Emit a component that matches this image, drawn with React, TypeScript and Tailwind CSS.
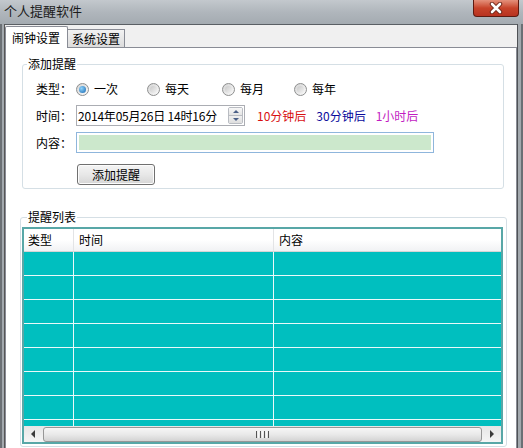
import React from "react";

const font = "font-['Noto_Sans_CJK_SC','Liberation_Sans',sans-serif]";

function Radio({ checked }: { checked?: boolean }) {
  return (
    <span className="w-[13px] h-[13px] rounded-full border border-[#8e8f8f] bg-linear-to-br from-[#d4d4d4] to-[#fbfbfb] flex items-center justify-center shrink-0">
      <span
        className={`w-[7px] h-[7px] rounded-full ${
          checked
            ? "bg-[radial-gradient(circle_at_35%_35%,#8fd3fb,#1666b0)]"
            : "bg-linear-to-br from-[#c9c9c9] to-[#f4f4f4]"
        }`}
      />
    </span>
  );
}

function Option({ label, checked, w }: { label: string; checked?: boolean; w: string }) {
  return (
    <div className={`flex items-center gap-[5px] ${w}`}>
      <Radio checked={checked} />
      <span>{label}</span>
    </div>
  );
}

function Arrow({ dir }: { dir: "up" | "down" | "left" | "right" }) {
  const pts = {
    up: "1,4 4,1 7,4",
    down: "1,1 4,4 7,1",
    left: "4,0 0,4 4,8",
    right: "0,0 4,4 0,8",
  }[dir];
  const size = dir === "up" || dir === "down" ? { w: 8, h: 5 } : { w: 5, h: 8 };
  return (
    <svg width={size.w} height={size.h} viewBox={`0 0 ${size.w} ${size.h}`}>
      <polygon points={pts} fill={dir === "up" || dir === "down" ? "#4a5f86" : "#3c3c3c"} />
    </svg>
  );
}

const rows = Array.from({ length: 8 }, (_, i) => i);

export default function App() {
  return (
    <div className={`${font} w-[523px] h-[448px] overflow-hidden flex flex-col text-[12px] text-black bg-[#a9afb5]`}>
      {/* title bar */}
      <div className="h-[24px] flex items-start justify-between bg-linear-to-b from-[#c3c8cd] via-[#b0b6bc] to-[#a4abb1] shrink-0">
        <span className="pl-[4px] pt-[3px] text-[13px] leading-[16px] text-[#1c1c1c]">个人提醒软件</span>
        <div className="mr-[4px] w-[46px] h-[17px] rounded-b-[4px] border border-t-0 border-[#5e1a10] bg-linear-to-b from-[#e4907b] via-[#c7432a] to-[#b83220] flex items-center justify-center">
          <svg width="14" height="12" viewBox="0 0 14 12">
            <path d="M3 2 L11 10 M11 2 L3 10" stroke="#6a2417" strokeWidth="4.5" strokeLinecap="round" />
            <path d="M3 2 L11 10 M11 2 L3 10" stroke="#ffffff" strokeWidth="2.6" strokeLinecap="round" />
          </svg>
        </div>
      </div>

      {/* body with frame */}
      <div className="flex flex-1 min-h-0">
        <div className="w-[5px] border-l-2 border-[#6b7075] bg-[#a3a9ae] border-r border-r-[#565656]" />
        <div className="flex-1 flex flex-col bg-[#f0f0f0] border-t border-[#5a5f64] min-w-0">
          {/* tabs */}
          <div className="h-[22px] flex items-end shrink-0">
            <div className="h-[22px] w-[63px] bg-white border border-b-0 border-[#898c95] rounded-t-[2px] flex items-center pl-[6px] relative z-10 -mb-px">
              闹钟设置
            </div>
            <div className="h-[18px] w-[57px] bg-linear-to-b from-[#f2f2f2] to-[#dcdcdc] border border-l-0 border-b-0 border-[#898c95] flex items-center pl-[4px]">
              系统设置
            </div>
          </div>

          {/* pane */}
          <div className="flex-1 bg-white border border-b-0 border-[#898c95] flex flex-col min-h-0">
            {/* add reminder */}
            <fieldset className="mt-[8px] ml-[16px] mr-[12px] h-[133px] border border-[#d5dfe5] rounded-[3px] flex flex-col">
              <legend className="ml-[4px] px-[1px] leading-[16px]">添加提醒</legend>
              <div className="mt-[7px] h-[20px] flex items-center pl-[13px]">
                <span className="w-[40px]">类型：</span>
                <Option label="一次" checked w="w-[71px]" />
                <Option label="每天" w="w-[75px]" />
                <Option label="每月" w="w-[72px]" />
                <Option label="每年" w="w-[60px]" />
              </div>
              <div className="mt-[6px] h-[21px] flex items-center pl-[13px]">
                <span className="w-[40px]">时间：</span>
                <div className="w-[169px] h-[21px] border border-[#abadb3] flex items-center justify-between pl-[1px] pr-[1px]">
                  <span className="tracking-[-0.2px]">2014年05月26日 14时16分</span>
                  <div className="w-[15px] h-[17px] border border-[#b9bcc2] rounded-[2px] flex flex-col overflow-hidden">
                    <div className="flex-1 flex items-center justify-center bg-linear-to-b from-[#f7f7f7] to-[#e4e4e4] border-b border-[#b9bcc2]">
                      <Arrow dir="up" />
                    </div>
                    <div className="flex-1 flex items-center justify-center bg-linear-to-b from-[#f0f0f0] to-[#dedede]">
                      <Arrow dir="down" />
                    </div>
                  </div>
                </div>
                <span className="ml-[12px] text-[#d81010]">10分钟后</span>
                <span className="ml-[10px] text-[#0a0a9c]">30分钟后</span>
                <span className="ml-[10px] text-[#c21cc2]">1小时后</span>
              </div>
              <div className="mt-[6px] h-[21px] flex items-center pl-[13px]">
                <span className="w-[40px]">内容：</span>
                <div className="w-[358px] h-[21px] border border-[#8fb6dc] p-[2px]">
                  <div className="w-full h-full bg-[#cce8cc]" />
                </div>
              </div>
              <div className="mt-[11px] pl-[54px]">
                <button className="w-[78px] h-[21px] border border-[#707070] rounded-[3px] bg-linear-to-b from-[#f4f4f4] via-[#e8e8e8] to-[#d6d6d6] shadow-[inset_0_0_0_1px_#fcfcfc] flex items-center justify-center">
                  添加提醒
                </button>
              </div>
            </fieldset>

            {/* reminder list */}
            <fieldset className="mt-[20px] ml-[14px] mr-[9px] h-[238px] border border-[#d5dfe5] rounded-[3px] flex flex-col min-h-0">
              <legend className="ml-[6px] px-[1px] leading-[16px]">提醒列表</legend>
              <div className="mt-[2px] ml-px mr-[3px] flex-1 mb-[2px] border-2 border-[#58a7a7] flex flex-col min-h-0">
                <div className="h-[23px] shrink-0 flex bg-linear-to-b from-white via-white to-[#f1f2f4] border-b border-[#d5d5d5]">
                  <div className="w-[50px] border-r border-[#e3e4e6] pl-[4px] flex items-center">类型</div>
                  <div className="w-[200px] border-r border-[#e3e4e6] pl-[5px] flex items-center">时间</div>
                  <div className="flex-1 pl-[5px] flex items-center">内容</div>
                </div>
                <div className="flex-1 min-h-0 overflow-hidden bg-[#00bfbf]">
                  {rows.map((r) => (
                    <div key={r} className="h-[24px] flex border-b border-[#e9f9f9]">
                      <div className="w-[50px] border-r border-[#e9f9f9]" />
                      <div className="w-[200px] border-r border-[#e9f9f9]" />
                      <div className="flex-1" />
                    </div>
                  ))}
                </div>
                <div className="h-[16px] shrink-0 flex items-center bg-linear-to-b from-[#e6e6e6] to-[#f5f5f5] px-[1px] gap-[2px]">
                  <div className="w-[16px] h-[16px] flex items-center justify-center">
                    <Arrow dir="left" />
                  </div>
                  <div className="flex-1 h-[15px] rounded-[3px] border border-[#979797] bg-linear-to-b from-[#f6f6f6] via-[#e9e9e9] to-[#d3d3d3] flex items-center justify-center gap-[1px]">
                    <span className="w-px h-[7px] bg-[#555]" />
                    <span className="w-px h-[7px] bg-[#f8f8f8]" />
                    <span className="w-px h-[7px] bg-[#555]" />
                    <span className="w-px h-[7px] bg-[#f8f8f8]" />
                    <span className="w-px h-[7px] bg-[#555]" />
                    <span className="w-px h-[7px] bg-[#f8f8f8]" />
                    <span className="w-px h-[7px] bg-[#555]" />
                  </div>
                  <div className="w-[16px] h-[16px] flex items-center justify-center">
                    <Arrow dir="right" />
                  </div>
                </div>
              </div>
            </fieldset>
          </div>
        </div>
        <div className="w-[6px] border-l border-[#4f5256] bg-[#a3a9ae] border-r-2 border-r-[#6b7075]" />
      </div>
    </div>
  );
}
